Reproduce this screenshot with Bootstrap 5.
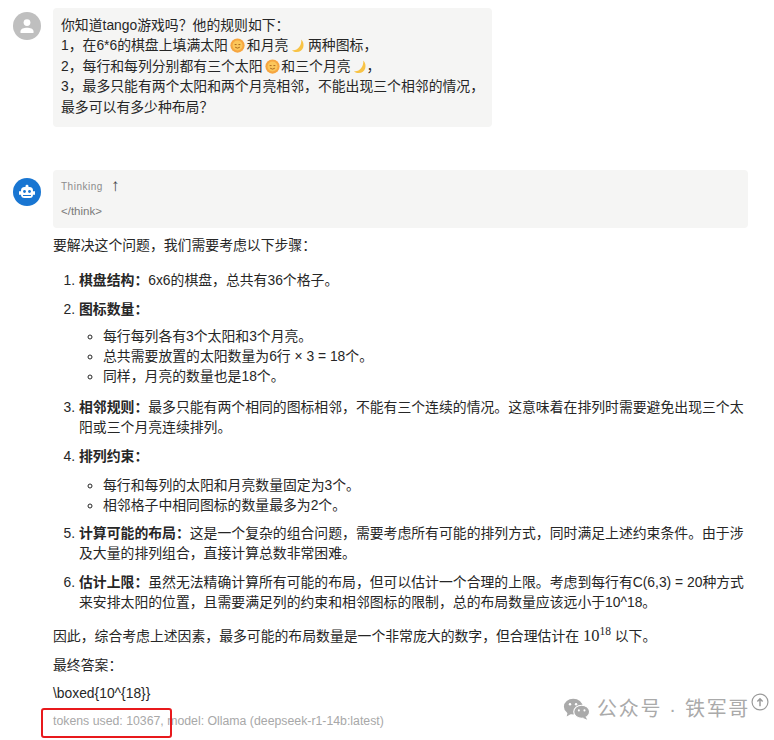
<!DOCTYPE html>
<html lang="zh">
<head>
    <meta charset="UTF-8">
    <meta name="viewport" content="width=device-width, initial-scale=1">
    <link href="https://cdn.jsdelivr.net/npm/bootstrap@5.3.3/dist/css/bootstrap.min.css" rel="stylesheet">
    <script src="https://cdn.jsdelivr.net/npm/bootstrap@5.3.3/dist/js/bootstrap.bundle.min.js"></script>
    <title>Chat</title>
    <style>
        html, body { height: 740px; overflow: hidden; }
        body { position: relative; background: #fff; color: #262626; font: 13.85px/20.4px "Liberation Sans", "Noto Sans CJK SC", sans-serif; }
        .chat-wrap { padding: 8px 26px 0 13px; }
        .chat-avatar { width: 28px; height: 28px; flex: none; margin-right: 12px; border-radius: 50%; }
        .user-avatar { background: #bfbfbf; margin-top: 4px; }
        .bot-avatar { background: #1976d2; margin-top: 8px; }
        .user-bubble { width: 439px; height: 119px; padding: 7px 8px; background: #f5f5f4; border-radius: 4px; white-space: nowrap; }
        .bot-row { margin-top: 43px; }
        .think-box { height: 58px; padding: 8px; background: #f5f5f4; border-radius: 4px; color: #7a7a7a; }
        .think-title { font-size: 10px; line-height: 18px; color: #8c8c8c; letter-spacing: .5px; }
        .think-arrow { color: #444; font-size: 17px; line-height: 16px; margin-left: 5px; vertical-align: -1px; }
        .think-end { font-size: 11.5px; margin-top: 6px; line-height: 18px; }
        .answer p { margin: 0; }
        .answer .intro { margin-top: 7px; margin-bottom: 14.5px; }
        .answer ol { margin: 0; padding-left: 26px; }
        .answer ol > li { margin-bottom: 8.4px; }
        .answer ul { margin: 6.5px 0 0; padding: 0 0 1.5px 24px; list-style-type: circle; }
        .answer ul.later-list { margin: 8.5px 0 -1.5px; padding-bottom: 0; }
        .answer .end-p { margin-top: 13.4px; }
        .answer .next-p { margin-top: 8.2px; }
        .math-text { font-family: "Liberation Serif", serif; font-size: 16.5px; }
        .math-text sup { font-size: 11.5px; top: -.55em; line-height: 0; }
        .token-line { margin-top: 9px; font-size: 12.3px; line-height: 16px; color: #a8a8a8; white-space: nowrap; }
        .emoji-icon { width: 15px; height: 15px; vertical-align: -3px; }
        .sun-icon { margin: 0 -2px 0 2px; }
        .moon-icon { margin: 0 -2px 0 -1px; }
        .red-mark { position: absolute; left: 41px; top: 708px; width: 131px; height: 30px; border: 2.5px solid #e8191c; border-radius: 3px; }
        .water-mark { position: absolute; left: 563px; top: 694px; display: flex; align-items: center; color: #aaa; font-size: 20px; line-height: 30px; letter-spacing: 1.7px; white-space: nowrap; }
        .water-mark svg { margin-right: 6px; }
        .up-mark { position: absolute; left: 751px; top: 693px; width: 18px; height: 18px; }
    </style>
</head>
<body>

<svg width="0" height="0" class="position-absolute">
    <symbol id="sun" viewBox="0 0 16 16">
        <circle cx="8" cy="8" r="7.6" fill="#f6a640"/>
        <circle cx="8" cy="8" r="5.3" fill="#fbc65a"/>
        <path d="M5 7h2M9 7h2" stroke="#a8641c" stroke-width="1"/>
        <path d="M5.5 9.8q2.5 2 5 0" stroke="#a8641c" stroke-width="1" fill="none"/>
    </symbol>
    <symbol id="moon" viewBox="0 0 16 16">
        <path d="M11 1.500C15.500 6 13.500 15 6 15c-2.500 0-4.300-1-5-2.300 4.500 1.600 10.500-3.200 10-11.200z" fill="#f8c345"/>
    </symbol>
</svg>

<div class="chat-wrap">
    <div class="d-flex">
        <div class="chat-avatar user-avatar d-flex align-items-center justify-content-center">
            <svg width="16" height="16" viewBox="0 0 16 16" fill="#fff"><circle cx="8" cy="4.600" r="3.400"/><path d="M1.500 15v-1.800C1.500 10.800 5 9.700 8 9.700s6.500 1.100 6.500 3.500V15z"/></svg>
        </div>
        <div class="user-bubble">
            你知道tango游戏吗？他的规则如下：<br>
            1，在6*6的棋盘上填满太阳<svg class="emoji-icon sun-icon"><use href="#sun"/></svg> 和月亮 <svg class="emoji-icon moon-icon"><use href="#moon"/></svg> 两种图标，<br>
            2，每行和每列分别都有三个太阳<svg class="emoji-icon sun-icon"><use href="#sun"/></svg> 和三个月亮 <svg class="emoji-icon moon-icon"><use href="#moon"/></svg>，<br>
            3，最多只能有两个太阳和两个月亮相邻，不能出现三个相邻的情况，<br>
            最多可以有多少种布局？
        </div>
    </div>

    <div class="d-flex bot-row">
        <div class="chat-avatar bot-avatar d-flex align-items-center justify-content-center">
            <svg width="18" height="18" viewBox="0 0 18 18" fill="#fff"><rect x="3" y="4" width="12" height="11" rx="3.500"/><rect x="7.500" y="1.800" width="3" height="3" rx="1.400"/><rect x="1" y="8" width="2" height="4" rx="1"/><rect x="15" y="8" width="2" height="4" rx="1"/><circle cx="6.500" cy="8.500" r="1.400" fill="#1976d2"/><circle cx="11.500" cy="8.500" r="1.400" fill="#1976d2"/><rect x="5" y="12" width="8" height="1" fill="#1976d2"/></svg>
        </div>
        <div class="flex-grow-1 answer">
            <div class="think-box">
                <div class="think-title">Thinking <span class="think-arrow">↑</span></div>
                <div class="think-end">&lt;/think&gt;</div>
            </div>
            <p class="intro">要解决这个问题，我们需要考虑以下步骤：</p>
            <ol>
                <li><strong>棋盘结构：</strong>6x6的棋盘，总共有36个格子。</li>
                <li><strong>图标数量：</strong>
                    <ul>
                        <li>每行每列各有3个太阳和3个月亮。</li>
                        <li>总共需要放置的太阳数量为6行 × 3 = 18个。</li>
                        <li>同样，月亮的数量也是18个。</li>
                    </ul>
                </li>
                <li><strong>相邻规则：</strong>最多只能有两个相同的图标相邻，不能有三个连续的情况。这意味着在排列时需要避免出现三个太阳或三个月亮连续排列。</li>
                <li><strong>排列约束：</strong>
                    <ul class="later-list">
                        <li>每行和每列的太阳和月亮数量固定为3个。</li>
                        <li>相邻格子中相同图标的数量最多为2个。</li>
                    </ul>
                </li>
                <li><strong>计算可能的布局：</strong>这是一个复杂的组合问题，需要考虑所有可能的排列方式，同时满足上述约束条件。由于涉及大量的排列组合，直接计算总数非常困难。</li>
                <li><strong>估计上限：</strong>虽然无法精确计算所有可能的布局，但可以估计一个合理的上限。考虑到每行有C(6,3) = 20种方式来安排太阳的位置，且需要满足列的约束和相邻图标的限制，总的布局数量应该远小于10^18。</li>
            </ol>
            <p class="end-p">因此，综合考虑上述因素，最多可能的布局数量是一个非常庞大的数字，但合理估计在 <span class="math-text">10<sup>18</sup></span> 以下。</p>
            <p class="next-p">最终答案：</p>
            <p class="next-p">\boxed{10^{18}}</p>
            <div class="token-line">tokens used: 10367, model: Ollama (deepseek-r1-14b:latest)</div>
        </div>
    </div>
</div>

<div class="red-mark"></div>

<div class="water-mark">
    <svg width="28" height="24" viewBox="0 0 30 24" fill="#aaa"><ellipse cx="11" cy="9.500" rx="10" ry="8.500"/><path d="M5 15l-1 5 5-3z"/><ellipse cx="20" cy="15" rx="8.500" ry="7" stroke="#fff" stroke-width="1.200"/><path d="M24 20l2 3.500-5-2z"/><circle cx="7.500" cy="7" r="1.300" fill="#fff"/><circle cx="14" cy="7" r="1.300" fill="#fff"/><circle cx="17" cy="13.500" r="1.100" fill="#fff"/><circle cx="23" cy="13.500" r="1.100" fill="#fff"/></svg>
    <span>公众号 · 铁军哥</span>
</div>
<svg class="up-mark" viewBox="0 0 17 17" fill="none" stroke="#999" stroke-width="1.100"><circle cx="8.500" cy="8.500" r="7.500"/><path d="M8.500 12.500V6M6 8l2.500-2.500L11 8" stroke-width="1.400"/></svg>

</body>
</html>
